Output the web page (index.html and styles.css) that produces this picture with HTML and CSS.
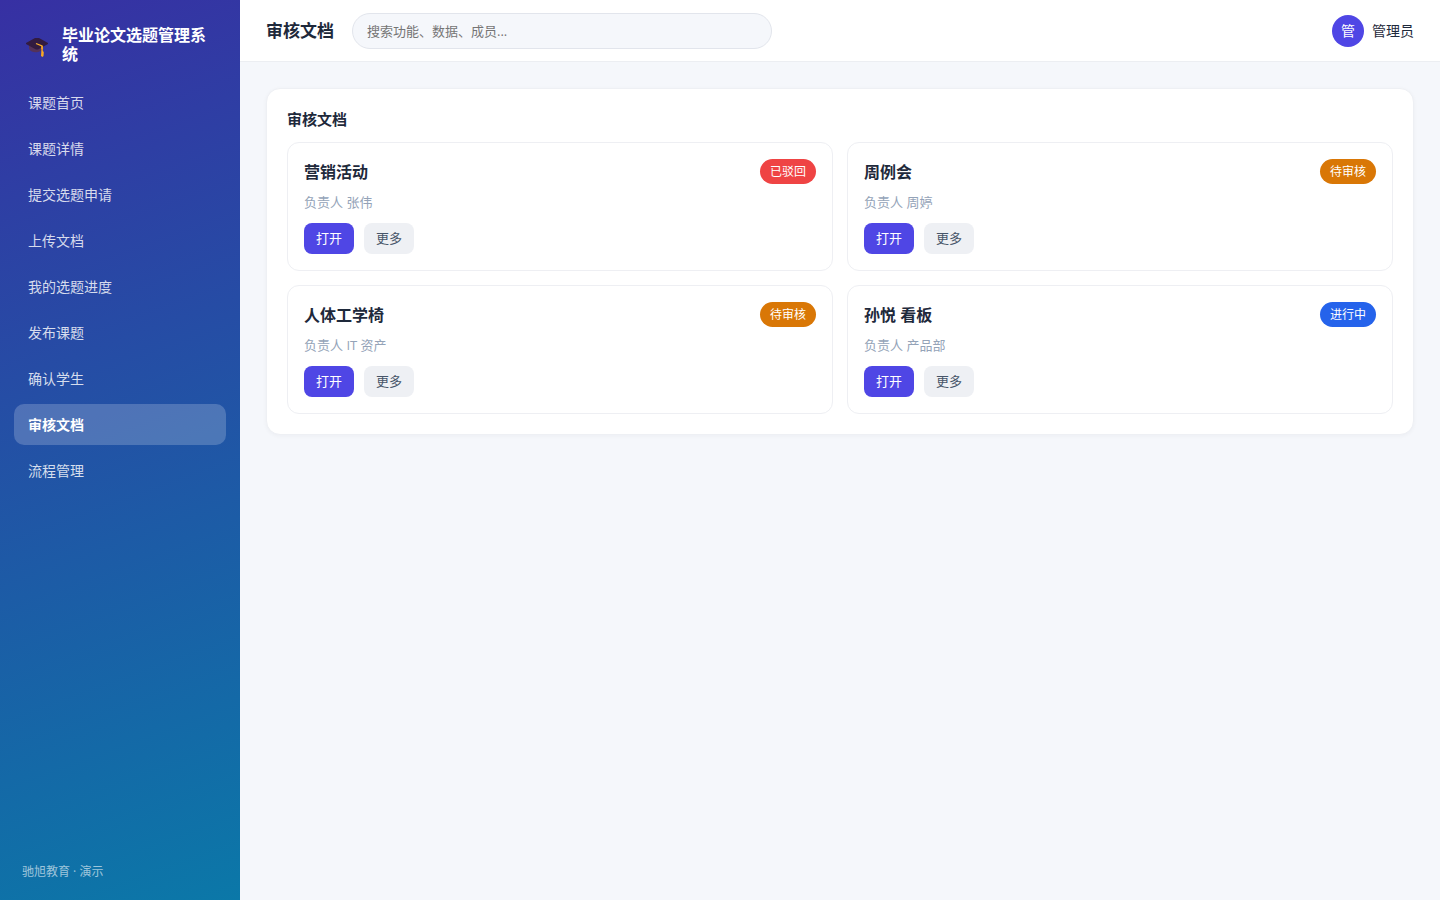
FILE: index.html
```html
<!DOCTYPE html>
<html lang="zh-CN">
<head>
<meta charset="utf-8">
<meta name="viewport" content="width=device-width, initial-scale=1">
<title>审核文档</title>
<link rel="stylesheet" href="styles.css">
</head>
<body>
<div class="app">
  <aside class="sidebar">
    <div class="brand">
      <svg class="brand-icon" viewBox="0 -6 22 26" aria-hidden="true">
        <path d="M3 7v4q3 4 9 3l5-2V7z" fill="#543259"/>
        <path d="M0 5 9 0h4l9 5v1l-10 5.500h-2L0 6z" fill="#321b40"/>
        <path d="m10 5.500 6 2.500v3" fill="none" stroke="#fbb02d" stroke-width="1.300"/>
        <path d="M15.500 8h1.300v5l1 1-.3 4-1 1-1.500-1 .3-4.500z" fill="#f9a825"/>
      </svg>
      <span class="brand-name">毕业论文选题管理系统</span>
    </div>
    <nav class="nav">
      <a class="nav-item" href="#home">课题首页</a>
      <a class="nav-item" href="#detail">课题详情</a>
      <a class="nav-item" href="#apply">提交选题申请</a>
      <a class="nav-item" href="#upload">上传文档</a>
      <a class="nav-item" href="#progress">我的选题进度</a>
      <a class="nav-item" href="#publish">发布课题</a>
      <a class="nav-item" href="#confirm">确认学生</a>
      <a class="nav-item active" href="#review" aria-current="page">审核文档</a>
      <a class="nav-item" href="#flow">流程管理</a>
    </nav>
    <div class="sidebar-foot">驰旭教育 · 演示</div>
  </aside>
  <div class="content">
    <header class="topbar">
      <h1 class="page-title">审核文档</h1>
      <input class="search" type="search" aria-label="搜索" placeholder="搜索功能、数据、成员...">
      <div class="user">
        <span class="avatar">管</span>
        <span>管理员</span>
      </div>
    </header>
    <main class="main">
      <section class="panel">
        <h2 class="panel-title">审核文档</h2>
        <div class="grid">
          <article class="card">
            <div class="card-head"><h3 class="card-title">营销活动</h3><span class="badge red">已驳回</span></div>
            <p class="owner">负责人 张伟</p>
            <div class="actions"><button class="btn primary" type="button">打开</button><button class="btn" type="button">更多</button></div>
          </article>
          <article class="card">
            <div class="card-head"><h3 class="card-title">周例会</h3><span class="badge amber">待审核</span></div>
            <p class="owner">负责人 周婷</p>
            <div class="actions"><button class="btn primary" type="button">打开</button><button class="btn" type="button">更多</button></div>
          </article>
          <article class="card">
            <div class="card-head"><h3 class="card-title">人体工学椅</h3><span class="badge amber">待审核</span></div>
            <p class="owner">负责人 IT 资产</p>
            <div class="actions"><button class="btn primary" type="button">打开</button><button class="btn" type="button">更多</button></div>
          </article>
          <article class="card">
            <div class="card-head"><h3 class="card-title">孙悦 看板</h3><span class="badge blue">进行中</span></div>
            <p class="owner">负责人 产品部</p>
            <div class="actions"><button class="btn primary" type="button">打开</button><button class="btn" type="button">更多</button></div>
          </article>
        </div>
      </section>
    </main>
  </div>
</div>
</body>
</html>
```
FILE: styles.css
```css
* { box-sizing: border-box; }
body {
  margin: 0;
  background: #f5f7fb;
  color: #1e293b;
  font-family: "Open Sans", "Noto Sans CJK SC", sans-serif;
  font-size: 14px;
  line-height: 20px;
}
h1, h2, h3, p { margin: 0; }
.app { display: flex; min-height: 100vh; }
.sidebar {
  display: flex;
  flex-direction: column;
  flex: 0 0 240px;
  padding: 22px 14px 18px;
  background: linear-gradient(160deg, #3730a3, #0b78a8);
  color: #fff;
}
.brand {
  display: flex;
  align-items: center;
  gap: 14px;
  padding: 4px 12px 18px;
}
.brand-icon { flex: none; width: 22px; height: 26px; }
.brand-name { font-size: 16px; font-weight: 700; line-height: 19px; }
.nav {
  display: flex;
  flex-direction: column;
  gap: 5px;
  font-family: "Noto Sans CJK SC", sans-serif;
}
.nav-item {
  padding: 10px 14px;
  border-radius: 10px;
  color: rgba(255, 255, 255, 0.82);
  line-height: 21px;
  text-decoration: none;
}
.nav-item.active {
  background: rgba(255, 255, 255, 0.2);
  color: #fff;
  font-weight: 700;
}
.sidebar-foot {
  margin-top: auto;
  padding: 0 8px;
  color: rgba(255, 255, 255, 0.6);
  font-size: 12px;
}
.content { flex: 1; min-width: 0; }
.topbar {
  display: flex;
  align-items: center;
  gap: 18px;
  min-height: 62px;
  padding: 12px 26px;
  border-bottom: 1px solid #eceef2;
  background: #fff;
}
.page-title { font-size: 17px; line-height: 24px; white-space: nowrap; }
.search {
  flex: 0 1 420px;
  min-width: 0;
  height: 36px;
  padding: 0 14px;
  border: 1px solid #e2e5ec;
  border-radius: 18px;
  background: #f5f7fb;
  color: inherit;
  font: inherit;
  font-size: 13px;
}
.search::placeholder { color: #757575; }
.user { display: flex; align-items: center; gap: 8px; margin-left: auto; white-space: nowrap; }
.avatar {
  display: grid;
  place-items: center;
  width: 32px;
  height: 32px;
  border-radius: 50%;
  background: #4f46e5;
  color: #fff;
}
.main { padding: 26px; }
.panel {
  padding: 20px;
  border: 1px solid #eef0f4;
  border-radius: 14px;
  background: #fff;
  box-shadow: 0 1px 4px rgba(15, 23, 42, 0.04);
}
.panel-title { margin-bottom: 13px; font-size: 15px; line-height: 20px; }
.grid { display: grid; grid-template-columns: repeat(2, minmax(0, 1fr)); gap: 14px; }
.card { padding: 16px; border: 1px solid #eeeff3; border-radius: 12px; }
.card-head { display: flex; align-items: center; justify-content: space-between; gap: 12px; }
.card-title { font-size: 16px; line-height: 24px; }
.badge {
  padding: 3px 10px;
  border-radius: 13px;
  color: #fff;
  font-size: 12px;
  line-height: 19px;
  white-space: nowrap;
}
.red { background: #ef4444; }
.amber { background: #d97706; }
.blue { background: #2563eb; }
.owner { margin: 8px 0 11px; color: #94a3b8; font-size: 13px; }
.actions { display: flex; gap: 10px; }
.btn {
  padding: 6px 12px;
  border: 0;
  border-radius: 8px;
  background: #eef0f4;
  color: #475569;
  font: inherit;
  font-size: 13px;
  line-height: 19px;
  cursor: pointer;
}
.btn.primary { background: #4f46e5; color: #fff; }
```
